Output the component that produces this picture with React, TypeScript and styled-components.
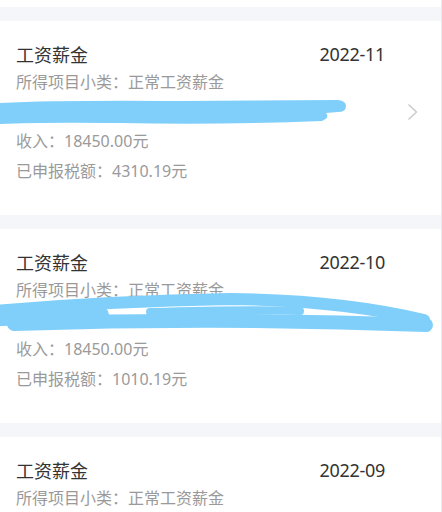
import React from "react";
import styled, { createGlobalStyle } from "styled-components";

const Global = createGlobalStyle`
  html, body { margin: 0; padding: 0; background: #f5f6fa; }
  body { font-family: "Noto Sans", "Noto Sans CJK SC", sans-serif; }
`;

const Page = styled.div`
  width: 442px;
  height: 512px;
  overflow: hidden;
  background: #f5f6fa;
  display: flex;
  flex-direction: column;
  gap: 14px;
  box-sizing: border-box;
  border-right: 1px solid #ebebef;
`;

const TopStrip = styled.div`
  height: 7px;
  background: #ffffff;
  flex: none;
`;

const Card = styled.div`
  position: relative;
  flex: none;
  height: 194px;
  box-sizing: border-box;
  background: #ffffff;
  display: flex;
  align-items: center;
`;

const Content = styled.div`
  flex: 1;
  align-self: stretch;
  display: flex;
  flex-direction: column;
  padding: 18px 0 29px 16px;
`;

const TitleRow = styled.div`
  display: flex;
  justify-content: space-between;
  align-items: center;
  height: 29px;
  font-size: 18px;
  color: #333333;
`;

const Month = styled.span`
  letter-spacing: -0.3px;
  margin-right: -2px;
`;

const Line = styled.div`
  height: 29.5px;
  line-height: 29.5px;
  font-size: 16px;
  color: #9a9a9a;
  white-space: nowrap;
`;

const ChevronBox = styled.div`
  width: 58px;
  flex: none;
  display: flex;
  justify-content: center;
  margin-top: -12px;
  color: #c9c9c9;
`;

const Scribble = styled.svg`
  position: absolute;
  left: 0;
  top: 0;
  pointer-events: none;
`;

type Item = { month: string; income: string; tax: string; scribble?: 1 | 2 };

const items: Item[] = [
  { month: "2022-11", income: "18450.00", tax: "4310.19", scribble: 1 },
  { month: "2022-10", income: "18450.00", tax: "1010.19", scribble: 2 },
  { month: "2022-09", income: "18450.00", tax: "1010.19" },
];

const BLUE = "#80cffa";

function ScribbleMark({ kind }: { kind: 1 | 2 }) {
  return (
    <Scribble width="442" height="194" viewBox="0 0 442 194">
      {kind === 1 ? (
        <path
          fill={BLUE}
          d="M -2 82 Q 60 79 180 80 L 338 79 Q 346 80 346 85 Q 346 91 338 91 L 326 92 Q 330 97 322 100 Q 220 104 120 102 Q 40 101 -2 103 Z"
        />
      ) : (
        <g fill="none" stroke={BLUE} strokeLinecap="round">
          <path d="M -6 82 Q 110 72 230 70 Q 340 71 424 91" strokeWidth="12" />
          <path d="M 14 95 Q 220 88 426 96" strokeWidth="14" />
          <path d="M -6 88 L 100 86" strokeWidth="18" />
          <path d="M 150 83 Q 250 80 300 82" strokeWidth="8" />
        </g>
      )}
    </Scribble>
  );
}

function Chevron() {
  return (
    <svg width="11" height="18" viewBox="0 0 11 18">
      <polyline points="1.5,1.5 9.5,9 1.5,16.5" fill="none" stroke="currentColor" strokeWidth="1.4" />
    </svg>
  );
}

export default function App() {
  return (
    <>
      <Global />
      <Page>
        <TopStrip />
        {items.map((it) => (
          <Card key={it.month}>
            <Content>
              <TitleRow>
                <span>工资薪金</span>
                <Month>{it.month}</Month>
              </TitleRow>
              <Line>所得项目小类：正常工资薪金</Line>
              <Line />
              <Line>收入：{it.income}元</Line>
              <Line>已申报税额：{it.tax}元</Line>
            </Content>
            <ChevronBox>
              <Chevron />
            </ChevronBox>
            {it.scribble && <ScribbleMark kind={it.scribble} />}
          </Card>
        ))}
      </Page>
    </>
  );
}
